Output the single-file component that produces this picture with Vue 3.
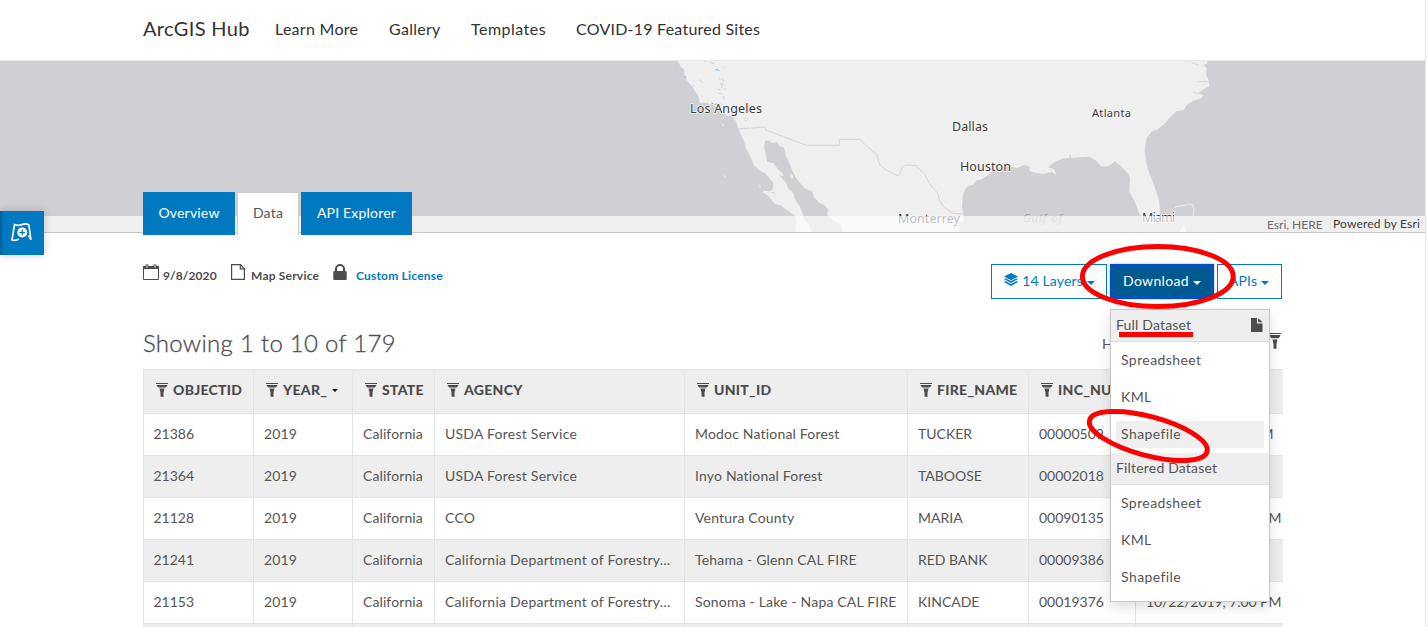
<script setup>
const columns = [
  { key: 'id', name: 'OBJECTID' },
  { key: 'year', name: 'YEAR_', sorted: true },
  { key: 'state', name: 'STATE' },
  { key: 'agency', name: 'AGENCY' },
  { key: 'unit', name: 'UNIT_ID' },
  { key: 'fire', name: 'FIRE_NAME' },
  { key: 'inc', name: 'INC_NUM' },
  { key: 'date', name: '' },
]
const rows = [
  { id: '21386', year: '2019', state: 'California', agency: 'USDA Forest Service', unit: 'Modoc National Forest', fire: 'TUCKER', inc: '00000509', date: '7/27/2019, 7:00 PM' },
  { id: '21364', year: '2019', state: 'California', agency: 'USDA Forest Service', unit: 'Inyo National Forest', fire: 'TABOOSE', inc: '00002018', date: '' },
  { id: '21128', year: '2019', state: 'California', agency: 'CCO', unit: 'Ventura County', fire: 'MARIA', inc: '00090135', date: '10/30/2019, 7:00 PM' },
  { id: '21241', year: '2019', state: 'California', agency: 'California Department of Forestry…', unit: 'Tehama - Glenn CAL FIRE', fire: 'RED BANK', inc: '00009386', date: '' },
  { id: '21153', year: '2019', state: 'California', agency: 'California Department of Forestry…', unit: 'Sonoma - Lake - Napa CAL FIRE', fire: 'KINCADE', inc: '00019376', date: '10/22/2019, 7:00 PM' },
  { id: '', year: '', state: '', agency: '', unit: '', fire: '', inc: '', date: '' },
]
const menu = [
  { title: 'Full Dataset', icon: true, items: ['Spreadsheet', 'KML', 'Shapefile'], active: 2 },
  { title: 'Filtered Dataset', icon: false, items: ['Spreadsheet', 'KML', 'Shapefile'], active: -1 },
]
</script>

<template>
  <div class="page">
    <header class="top">
      <span class="brand">ArcGIS Hub</span>
      <nav>
        <a class="n1">Learn More</a>
        <a class="n2">Gallery</a>
        <a class="n3">Templates</a>
        <a class="n4">COVID-19 Featured Sites</a>
      </nav>
    </header>

    <section class="hero">
      <svg class="map" width="1425" height="171" viewBox="0 0 1425 171">
        <g transform="translate(660 -11) scale(.33333)">
          <path class="land" d="M52 30L62 50 72 58 74 80 86 98 98 112 108 128 116 140 118 158 140 158 160 166 182 178 200 198 214 198 228 214 235 236 243 254 250 268 258 294 270 318 282 346 300 362 318 372 330 388 340 398 338 418 330 424 310 422 308 427 325 438 345 462 362 466 385 484 404 496 408 520 406 550H455L448 525 434 510 428 490 420 470 406 450 400 430 384 415 378 398 362 380 356 360 340 340 322 335 318 315 312 290 316 272 330 272 335 280 350 276 360 290 372 292 378 318 388 340 396 360 406 380 418 396 436 416 456 424 462 442 478 458 494 466 506 480 500 492 520 512 546 526 547 550H898L896 520 912 512 910 492 906 470 908 440 914 420 924 408 940 404 948 392 965 388 985 376 1000 360 1020 352 1050 350 1072 354 1090 346 1105 350 1110 364 1125 368 1152 372 1175 366 1190 374 1182 358 1165 352 1185 335 1210 325 1228 325 1231 312 1234 324 1260 322 1290 320 1310 334 1325 350 1345 348 1365 334 1380 346 1405 372 1410 385 1408 425 1422 450 1430 470 1440 495 1455 510 1480 520 1492 515 1500 495 1498 455 1490 430 1480 400 1468 370 1458 335 1454 300 1460 265 1475 245 1495 237 1515 220 1532 200 1550 184 1572 180 1580 165 1600 152 1625 145 1630 135 1615 130 1628 120 1648 108 1646 90 1638 75 1640 55 1630 45 1643 40 1640 30Z" />
          <path class="land" d="M300 402l3 12-5-2zM191 370l6 10-2 4zM358 360l14 16-6 3-9-10zM392 370l8 8-3 10-6-5zM188 200l5 4-4 4zM186 220l7 8-4 2zM1560 545l12-22 8 24z" />
          <path class="isle" d="M1544 472l20-5 18-2M1582 461l16 4 4 15-2 17" />
          <path class="lake" d="M1088 350l14-3 8 6-10 3-8 5M1615 95h32M1595 38l20 7M1600 125l14 8" />
          <path class="border" d="M235 237L315 231 317 240 440 286H538V268H599L620 288 650 313 658 342 672 356 712 378 720 370 727 350 742 345 769 347 795 374 808 400 835 432 838 450 852 472 880 490 912 492" />
          <path class="speck" d="M132 34h8M148 36l10 4M155 42l8-3M190 50l4 5M116 88l12 10M178 84l4 6M188 82l2 14M180 101l12 2M184 106l2 9M172 117l9 3M194 114l3 6M176 130l8 1M190 138l3 12M125 137l3 4M182 160l4 4M254 203l4 3M254 211l6 2M98 106l5 2M334 427l12 3" />
          <path class="blue" d="M166 60l5-1M172 57l6 6M73 80l6 2M154 159l6 3M163 164l6-3" />
        </g>
        <g class="cities">
          <text x="690" y="52" textLength="72">Los Angeles</text>
          <text x="952" y="70" textLength="36">Dallas</text>
          <text x="960" y="110" textLength="51">Houston</text>
          <text class="sm" x="1092" y="56" textLength="39">Atlanta</text>
          <text x="898" y="162" textLength="62">Monterrey</text>
          <text x="1142" y="161" textLength="33">Miami</text>
          <text class="sea" x="1023" y="161" textLength="39">Gulf of</text>
        </g>
      </svg>
      <div class="credit"><span class="src">Esri, HERE</span><span class="pow">Powered by Esri</span></div>
      <div class="tabs">
        <a class="tab t1">Overview</a>
        <a class="tab on">Data</a>
        <a class="tab t3">API Explorer</a>
      </div>
      <button class="side">
        <svg width="22" height="20" viewBox="0 0 22 20" fill="none" stroke="#fff" stroke-width="1.6">
          <path d="M17.500 13.500L20 17.500 17.800 2.800Q14.500 1.200 11 2.500 7.500 4.200 3.500 2.500L1 18Q5 19 7.800 17" />
          <circle cx="11.300" cy="10.500" r="5" fill="#fff" stroke="none" />
          <path stroke="#0079c1" stroke-width="1.200" d="M11.300 7.500v6M8.300 10.500h6" />
        </svg>
      </button>
    </section>

    <main>
      <div class="bar">
        <div class="meta">
          <svg class="cal" width="16" height="17" viewBox="0 0 16 17"><path fill="none" stroke="#4c4c4c" d="M.5 3v12.500h15V3" /><path fill="#4c4c4c" d="M0 2h2.500V.8q1.500-1.300 3 0V2h5V.8q1.500-1.300 3 0V2H16v3H0z" /><path stroke="#fff" d="M4 1.200v2.500M12 1.200v2.500" /></svg>
          <span class="m1">9/8/2020</span>
          <svg class="doc" width="14" height="16" viewBox="0 0 14 16" fill="none" stroke="#4c4c4c" stroke-width="1.200"><path d="M.6.6h8.900l3.900 4.200v10.600H.6z" /><path d="M9.300.6v4.200h4" /></svg>
          <span class="m2">Map Service</span>
          <svg class="lock" width="14" height="16" viewBox="0 0 14 16"><path d="M3 8V4.800a4 3.800 0 018 0V8" fill="none" stroke="#4c4c4c" stroke-width="2" /><rect y="7" x=".3" width="13.400" height="9" rx="1" fill="#4c4c4c" /></svg>
          <a class="m3">Custom License</a>
        </div>
        <div class="actions">
          <button class="btn layers">
            <svg width="14" height="15" viewBox="0 0 14 15" fill="#0079c1"><path d="M7 0l7 3.500L7 7.200 0 3.500z" /><path d="M0 6l1.500-.8L7 8l5.500-2.800L14 6 7 10zM0 8.900l1.500-.8L7 10.900l5.500-2.800 1.500.8-7 4z" /></svg>
            <span>14 Layers</span><i class="caret"></i>
          </button>
          <button class="btn dl"><span>Download</span><i class="caret"></i></button>
          <button class="btn apis"><span>APIs</span><i class="caret"></i></button>
          <div class="menu">
            <template v-for="g in menu" :key="g.title">
              <div class="mhead">
                <span>{{ g.title }}</span>
                <svg v-if="g.icon" width="12" height="14" viewBox="0 0 12 14" fill="#4c4c4c"><path d="M0 0h6v5.500h5.500V14H0z" /><path d="M7.200 0l4.300 4.300H7.200z" /></svg>
              </div>
              <div v-for="(it, i) in g.items" :key="it" class="item" :class="{ active: i === g.active }">{{ it }}</div>
            </template>
          </div>
        </div>
      </div>

      <div class="sub">
        <h2>Showing 1 to 10 of 179</h2>
        <div class="hide"><span>H</span>
          <svg width="12" height="16" viewBox="0 0 12 16" fill="#4c4c4c"><path d="M0 0h12v1.100H0zM.8 2h10.400v1L9.600 5.200H2.400L.8 3zM3.500 6.500h5L7.500 11v5l-3-.6V11z" /></svg>
        </div>
      </div>

      <div class="grid">
        <div class="row head">
          <div v-for="c in columns" :key="c.key" class="cell" :class="c.key">
            <template v-if="c.name">
              <svg width="12" height="14" viewBox="0 0 12 14" fill="#4c4c4c"><path d="M0 0h12v1.100H0zM.8 2h10.400v1L9.600 4.600H2.400L.8 3zM3.500 5.500h5L7.500 9.500V14l-3-.6V9.500z" /></svg>
              <span>{{ c.name }}</span><i v-if="c.sorted" class="sort"></i>
            </template>
          </div>
        </div>
        <div v-for="(r, i) in rows" :key="i" class="row">
          <div v-for="c in columns" :key="c.key" class="cell" :class="c.key">{{ r[c.key] }}</div>
        </div>
      </div>
    </main>

    <svg class="marks" width="1428" height="627" viewBox="0 0 1428 627" fill="none" stroke="#fe0000" stroke-width="5">
      <ellipse cx="1157.800" cy="276.500" rx="75.400" ry="30" />
      <ellipse cx="1148.300" cy="436" rx="60.800" ry="19.500" transform="rotate(14.900 1148.300 436)" />
      <path d="M1119 334.500h74" />
    </svg>
  </div>
</template>

<style>
html, body { overflow: hidden; background: #fff; }
</style>

<style scoped>
* { box-sizing: border-box; }
.page { position: relative; width: 1428px; height: 627px; overflow: hidden; background: linear-gradient(90deg, #fff 1425px, #e8e8e8 1425px, #e8e8e8 1426px, #fafafa 1426px); font-family: Lato, "Open Sans", sans-serif; color: #555; font-size: 14px; }
.top { height: 61px; width: 1425px; border-bottom: 1px solid #eaeaea; display: flex; align-items: center; padding: 0 0 4px 143px; color: #323232; white-space: nowrap; }
.brand { font-size: 20px; width: 132px; letter-spacing: .35px; }
nav { display: flex; font-size: 16px; letter-spacing: .27px; }
.n1 { width: 114px; } .n2 { width: 82px; } .n3 { width: 105px; letter-spacing: .48px; }
.n4 { letter-spacing: .23px; }
.hero { position: relative; height: 172px; width: 1425px; background: #d0cfd4; border-bottom: 1px solid #c6c6c6; }
.map { display: block; }
.land { fill: #efefef; }
.isle { fill: none; stroke: #efefef; stroke-width: 3; }
.lake { fill: none; stroke: #cfced3; stroke-width: 2.500; }
.border { fill: none; stroke: #cecece; stroke-width: 2.500; }
.speck { fill: none; stroke: #cfcfd3; stroke-width: 3; }
.blue { fill: none; stroke: #69b1dc; stroke-width: 3; }
.cities { font: 12.500px "Noto Sans", sans-serif; fill: #3b3b3b; paint-order: stroke; stroke: #f6f6f6; stroke-width: 1.500px; }
.cities .sm { font-size: 11px; }
.cities .sea { font-style: italic; font-size: 11px; fill: #a4a4aa; stroke: none; }
.credit { position: absolute; left: 0; right: 0; bottom: 0; height: 16px; background: rgba(255, 255, 255, .66); display: flex; justify-content: flex-end; padding-right: 5px; font-size: 12px; line-height: 16px; white-space: nowrap; }
.src { width: 66px; color: #6a6a6a; padding-top: 1px; }
.pow { width: 87px; color: #3c3c3c; letter-spacing: .18px; }
.tabs { position: absolute; left: 143px; top: 131px; display: flex; }
.tab { height: 43px; background: #0079c1; color: #fff; display: flex; align-items: center; justify-content: center; font-size: 14px; letter-spacing: .2px; padding-bottom: 2px; }
.t1 { width: 92px; } .t3 { width: 111px; margin-left: 2px; }
.tab.on { width: 62px; margin-left: 2px; background: #fff; color: #555; border: 1px solid #ccc; border-bottom: 0; padding-bottom: 3px; }
.side { position: absolute; left: 0; top: 150px; width: 44px; height: 44px; border: 0; padding: 0 0 2px; background: linear-gradient(90deg, #005f98, #0079c1 4px); box-shadow: 0 0 8px rgba(0, 0, 0, .2); display: flex; align-items: center; justify-content: center; }
main { width: 1140px; margin-left: 143px; }
.bar { height: 66px; display: flex; justify-content: space-between; padding-top: 31px; }
.meta { display: flex; height: 20px; align-items: flex-start; font-weight: 700; font-size: 12px; line-height: 24px; white-space: nowrap; color: #4c4c4c; }
.m1 { width: 68px; margin-left: 4px; letter-spacing: .1px; }
.m2 { width: 82px; margin-left: 6px; letter-spacing: .2px; }
.m3 { margin-left: 9px; color: #0079c1; letter-spacing: .2px; }
.actions { position: relative; display: flex; gap: 3px; margin-right: 1px; }
.btn { height: 35px; border: 1px solid #0079c1; background: #fff; color: #0079c1; font: inherit; display: flex; align-items: center; justify-content: center; padding: 0 0 2px; white-space: nowrap; letter-spacing: .15px; }
.layers { width: 116px; padding-left: 1px; } .layers svg { margin: 2px 4px 3px 0; }
.dl { width: 104px; background: #005a8f; border: 3px solid #0052bd; color: #fff; box-shadow: 0 0 2px #7eaaf0; letter-spacing: .35px; }
.apis { width: 65px; padding-right: 1px; }
.caret { margin: 4px 0 0 4px; border: 4px solid transparent; border-top-color: currentColor; border-bottom: 0; }
.menu { position: absolute; z-index: 2; left: 119px; top: 45px; width: 160px; background: #fff; border: 1px solid #c8c8c8; box-shadow: 0 5px 12px rgba(0, 0, 0, .13); padding-bottom: 5px; letter-spacing: .3px; }
.mhead { height: 32px; background: #eee; border-bottom: 1px solid #ddd; padding: 0 6px 2px 5px; display: flex; align-items: center; justify-content: space-between; letter-spacing: .18px; }
.item { height: 27px; margin: 5px; padding-left: 5px; line-height: 25px; letter-spacing: .42px; }
.item + .item { margin-top: 10px; }
.item.active { background: #efefef; }
.sub { height: 70px; display: flex; justify-content: space-between; }
h2 { margin: 29px 0 0; font-size: 24px; line-height: 30px; font-weight: 300; letter-spacing: .28px; color: #4c4c4c; -webkit-text-stroke: .3px #4c4c4c; }
.hide { display: flex; justify-content: space-between; width: 181px; padding: 34px 2px 0 0; height: 60px; line-height: 22px; }
.grid { height: 258px; overflow: hidden; border-left: 1px solid #e3e3e3; border-top: 1px solid #e3e3e3; }
.row { display: grid; grid-template-columns: 110px 99px 82px 250px 223px 121px 107px 147px; height: 42px; }
.row:nth-child(odd) { background: #eee; }
.row:nth-child(2) { background: #fff; }
.cell { border-right: 1px solid #e3e3e3; border-bottom: 1px solid #e3e3e3; padding-left: 10px; line-height: 39px; white-space: nowrap; overflow: hidden; letter-spacing: .1px; }
.cell.id { padding-left: 9.500px; letter-spacing: 0; }
.cell.inc { letter-spacing: 0; }
.cell.agency { letter-spacing: .24px; }
.cell.unit { letter-spacing: .18px; }
.cell.fire { letter-spacing: 0; }
.cell.date { border-right: 0; letter-spacing: -.1px; }
.row.head { height: 44px; }
.row.head .cell { display: flex; align-items: center; font-weight: 900; font-size: 14px; padding: 0 0 3px 12px; letter-spacing: .28px; color: #4c4c4c; }
.head span { margin: -1px 0 0 5px; line-height: 18px; }
.sort { margin-left: 5px; border: 3.500px solid transparent; border-top-color: #000; border-bottom: 0; }
.marks { position: absolute; left: 0; top: 0; z-index: 5; pointer-events: none; }
</style>
